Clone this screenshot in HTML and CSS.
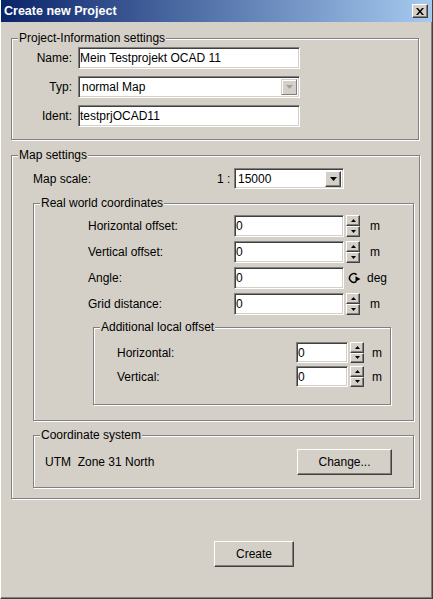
FILE: index.html
```html
<!DOCTYPE html>
<html lang="en">
<head>
    <meta charset="utf-8">
    <link rel="stylesheet" href="styles.css">
    <title>Create new Project</title>
</head>
<body>
<div class="window">
    <div class="titlebar">
        <span class="title">Create new Project</span>
        <span class="close-btn">
            <svg width="8" height="7" viewBox="0 0 8 7"><path d="M0 0h2l2 2.5L6 0h2L5 3.5 8 7H6L4 4.5 2 7H0l3-3.5z" fill="#000"/></svg>
        </span>
    </div>

    <div class="content">
        <div class="group group-info">
            <div class="group-title">Project-Information settings</div>
            <div class="info-rows">
                <span class="info-label">Name:</span>
                <input class="field info-field" value="Mein Testprojekt OCAD 11">
                <span class="info-label">Typ:</span>
                <div class="field combo info-field">
                    <span class="combo-text">normal Map</span>
                    <span class="combo-btn disabled">
                        <svg width="7" height="4" viewBox="0 0 7 4"><path d="M0 0h7L3.5 4z" fill="#a0a0a0"/></svg>
                    </span>
                </div>
                <span class="info-label">Ident:</span>
                <input class="field info-field" value="testprjOCAD11">
            </div>
        </div>

        <div class="group group-map">
            <div class="group-title">Map settings</div>
            <div class="scale-row">
                <span class="scale-label">Map scale:</span>
                <span class="scale-ratio">1 :</span>
                <div class="field combo scale-field">
                    <span class="combo-text">15000</span>
                    <span class="combo-btn">
                        <svg width="7" height="4" viewBox="0 0 7 4"><path d="M0 0h7L3.5 4z" fill="#000"/></svg>
                    </span>
                </div>
            </div>

            <div class="group group-world">
                <div class="group-title">Real world coordinates</div>
                <div class="world-rows">
                    <div class="value-row">
                        <span class="world-label">Horizontal offset:</span>
                        <input class="field world-field" value="0">
                        <div class="spin">
                            <span class="spin-btn"><svg width="5" height="3" viewBox="0 0 5 3"><path d="M2.5 0L5 3H0z"/></svg></span>
                            <span class="spin-btn"><svg width="5" height="3" viewBox="0 0 5 3"><path d="M0 0h5L2.5 3z"/></svg></span>
                        </div>
                        <span class="unit">m</span>
                    </div>
                    <div class="value-row">
                        <span class="world-label">Vertical offset:</span>
                        <input class="field world-field" value="0">
                        <div class="spin">
                            <span class="spin-btn"><svg width="5" height="3" viewBox="0 0 5 3"><path d="M2.5 0L5 3H0z"/></svg></span>
                            <span class="spin-btn"><svg width="5" height="3" viewBox="0 0 5 3"><path d="M0 0h5L2.5 3z"/></svg></span>
                        </div>
                        <span class="unit">m</span>
                    </div>
                    <div class="value-row">
                        <span class="world-label">Angle:</span>
                        <input class="field world-field" value="0">
                        <svg class="rotate-icon" width="14" height="12" viewBox="0 0 14 12">
                            <path d="M8.6 2.6A4.3 4.3 0 1 0 8.4 9.4" fill="none" stroke="#000" stroke-width="1.5"/>
                            <path d="M7.5 4.2L7.5 9.8 12.5 7z" fill="#000"/>
                        </svg>
                        <span class="unit unit-deg">deg</span>
                    </div>
                    <div class="value-row">
                        <span class="world-label">Grid distance:</span>
                        <input class="field world-field" value="0">
                        <div class="spin">
                            <span class="spin-btn"><svg width="5" height="3" viewBox="0 0 5 3"><path d="M2.5 0L5 3H0z"/></svg></span>
                            <span class="spin-btn"><svg width="5" height="3" viewBox="0 0 5 3"><path d="M0 0h5L2.5 3z"/></svg></span>
                        </div>
                        <span class="unit">m</span>
                    </div>
                </div>

                <div class="group group-local">
                    <div class="group-title">Additional local offset</div>
                    <div class="local-rows">
                        <div class="value-row local-row">
                            <span class="local-label">Horizontal:</span>
                            <input class="field local-field" value="0">
                            <div class="spin">
                                <span class="spin-btn"><svg width="5" height="3" viewBox="0 0 5 3"><path d="M2.5 0L5 3H0z"/></svg></span>
                                <span class="spin-btn"><svg width="5" height="3" viewBox="0 0 5 3"><path d="M0 0h5L2.5 3z"/></svg></span>
                            </div>
                            <span class="unit">m</span>
                        </div>
                        <div class="value-row local-row">
                            <span class="local-label">Vertical:</span>
                            <input class="field local-field" value="0">
                            <div class="spin">
                                <span class="spin-btn"><svg width="5" height="3" viewBox="0 0 5 3"><path d="M2.5 0L5 3H0z"/></svg></span>
                                <span class="spin-btn"><svg width="5" height="3" viewBox="0 0 5 3"><path d="M0 0h5L2.5 3z"/></svg></span>
                            </div>
                            <span class="unit">m</span>
                        </div>
                    </div>
                </div>
            </div>

            <div class="group group-coord">
                <div class="group-title">Coordinate system</div>
                <div class="coord-row">
                    <span class="coord-text">UTM&nbsp; Zone 31 North</span>
                    <span class="btn btn-change">Change...</span>
                </div>
            </div>
        </div>

        <span class="btn btn-create">Create</span>
    </div>
</div>
</body>
</html>
```

FILE: styles.css
```css
body{
    margin: 0;
    background-color: #d4d0c8;
    font-family: "Liberation Sans", Arial, sans-serif;
    font-size: 12px;
    color: #000;
}

.window{
    width: 433px;
    height: 599px;
    box-sizing: border-box;
    border-left: 1px solid #fff;
    border-right: 1px solid #404040;
    border-bottom: 1px solid #404040;
    box-shadow: inset -1px -1px #808080;
    background-color: #d4d0c8;
}

.titlebar{
    height: 22px;
    display: flex;
    align-items: center;
    justify-content: space-between;
    padding: 0 4px 0 3px;
    background: linear-gradient(to right, #0a246a, #a6caf0);
}
.title{
    color: #fff;
    font-weight: bold;
    font-size: 12.5px;
}
.close-btn{
    width: 16px;
    height: 14px;
    box-sizing: border-box;
    display: flex;
    align-items: center;
    justify-content: center;
    background-color: #d4d0c8;
    border: 1px solid;
    border-color: #fff #404040 #404040 #fff;
    box-shadow: inset -1px -1px #808080;
}

.content{
    padding: 16px 0 0 10px;
}

/* etched group boxes */
.group{
    display: flex;
    flex-direction: column;
    box-sizing: border-box;
    border: 1px solid #808080;
    box-shadow: inset 1px 1px #fff, 1px 1px #fff;
}
.group-title{
    align-self: flex-start;
    margin: -8px 0 0 6px;
    padding: 0 1px;
    line-height: 14px;
    background-color: #d4d0c8;
}

/* sunken fields */
.field{
    box-sizing: border-box;
    height: 22px;
    margin: 0;
    padding: 0 0 0 1px;
    border: 1px solid;
    border-color: #808080 #fff #fff #808080;
    box-shadow: inset 1px 1px #404040, inset -1px -1px #d4d0c8;
    background-color: #fff;
    font-family: inherit;
    font-size: 12px;
    color: #000;
    outline: none;
}
.combo{
    display: flex;
    align-items: center;
    padding: 2px 2px 2px 3px;
}
.combo-text{
    flex: 1;
}
.combo-btn{
    width: 16px;
    height: 16px;
    box-sizing: border-box;
    display: flex;
    align-items: center;
    justify-content: center;
    background-color: #d4d0c8;
    border: 1px solid;
    border-color: #fff #404040 #404040 #fff;
    box-shadow: inset -1px -1px #808080;
}
.combo-btn.disabled{
    border-color: #d4d0c8 #808080 #808080 #d4d0c8;
    box-shadow: inset 1px 1px #fff;
}

/* Project-Information settings */
.group-info{
    width: 408px;
    padding-bottom: 12px;
}
.info-rows{
    display: grid;
    grid-template-columns: 60px 222px;
    column-gap: 6px;
    row-gap: 7px;
    align-items: center;
    margin-top: 2px;
}
.info-label{
    text-align: right;
}
.info-field{
    width: 222px;
}

/* Map settings */
.group-map{
    width: 409px;
    margin-top: 15px;
    padding-bottom: 10px;
}
.scale-row{
    display: flex;
    align-items: center;
    margin: 6px 0 0 21px;
}
.scale-label{
    width: 184px;
}
.scale-ratio{
    width: 17px;
}
.scale-field{
    width: 110px;
    height: 21px;
    padding-top: 1px;
    padding-bottom: 1px;
}

.group-world{
    width: 381px;
    margin: 14px 0 0 21px;
    padding-bottom: 15px;
}
.world-rows{
    display: flex;
    flex-direction: column;
    gap: 4px;
    margin-top: 5px;
}
.value-row{
    display: flex;
    align-items: center;
}
.world-label{
    width: 146px;
    padding-left: 54px;
}
.world-field{
    width: 110px;
}

.spin{
    display: flex;
    flex-direction: column;
    margin-left: 2px;
}
.spin-btn{
    width: 14px;
    height: 11px;
    box-sizing: border-box;
    display: flex;
    align-items: center;
    justify-content: center;
    background-color: #d4d0c8;
    border: 1px solid;
    border-color: #fff #404040 #404040 #fff;
    box-shadow: inset -1px -1px #808080;
}
.unit{
    margin-left: 10px;
}
.rotate-icon{
    margin-left: 4px;
}
.unit-deg{
    margin-left: 5px;
}

.group-local{
    width: 298px;
    margin: 12px 0 0 59px;
    padding-bottom: 17px;
}
.local-rows{
    display: flex;
    flex-direction: column;
    gap: 3px;
    margin-top: 8px;
}
.local-label{
    width: 179px;
    padding-left: 23px;
}
.local-field{
    width: 52px;
    height: 21px;
}
.local-row .spin-btn{
    height: 10.5px;
}
.local-row .unit{
    margin-left: 8px;
}

.group-coord{
    width: 381px;
    margin: 14px 0 0 21px;
    padding-bottom: 12px;
}
.coord-row{
    display: flex;
    align-items: center;
    justify-content: space-between;
    margin: 7px 21px 0 11px;
}

/* raised push buttons */
.btn{
    display: flex;
    align-items: center;
    justify-content: center;
    box-sizing: border-box;
    height: 26px;
    background-color: #d4d0c8;
    border: 1px solid;
    border-color: #fff #404040 #404040 #fff;
    box-shadow: inset -1px -1px #808080;
}
.btn-change{
    width: 95px;
}
.btn-create{
    width: 80px;
    margin: 42px 0 0 203px;
}
```
